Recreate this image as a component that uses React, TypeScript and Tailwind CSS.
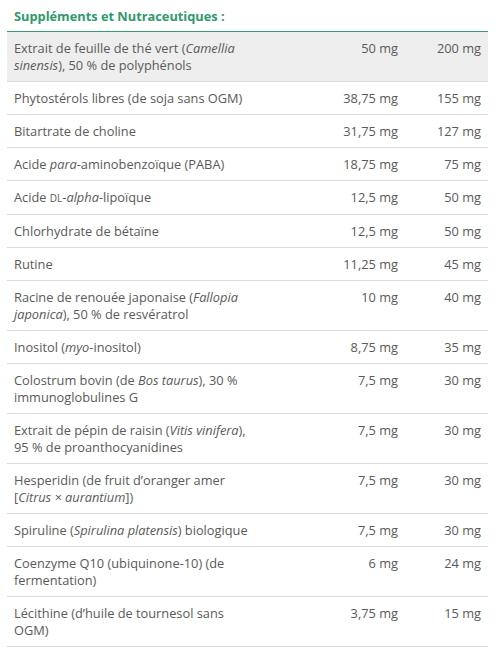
import React from "react";

type Row = { name: React.ReactNode; a: string; b: string; shade?: boolean };

const I = ({ children }: { children: React.ReactNode }) => <i>{children}</i>;

const rows: Row[] = [
  { name: <>Extrait de feuille de thé vert (<I>Camellia sinensis</I>), 50{"\u00a0"}% de polyphénols</>, a: "50 mg", b: "200 mg", shade: true },
  { name: <>Phytostérols libres (de soja sans OGM)</>, a: "38,75 mg", b: "155 mg" },
  { name: <>Bitartrate de choline</>, a: "31,75 mg", b: "127 mg" },
  { name: <>Acide <I>para</I>-aminobenzoïque (PABA)</>, a: "18,75 mg", b: "75 mg" },
  { name: <>Acide <span className="text-[10px] uppercase">dl</span>-<I>alpha</I>-lipoïque</>, a: "12,5 mg", b: "50 mg" },
  { name: <>Chlorhydrate de bétaïne</>, a: "12,5 mg", b: "50 mg" },
  { name: <>Rutine</>, a: "11,25 mg", b: "45 mg" },
  { name: <>Racine de renouée japonaise (<I>Fallopia japonica</I>), 50{"\u00a0"}% de resvératrol</>, a: "10 mg", b: "40 mg" },
  { name: <>Inositol (<I>myo</I>-inositol)</>, a: "8,75 mg", b: "35 mg" },
  { name: <>Colostrum bovin (de <I>Bos taurus</I>), 30{"\u00a0"}% immunoglobulines G</>, a: "7,5 mg", b: "30 mg" },
  { name: <>Extrait de pépin de raisin (<I>Vitis vinifera</I>), 95{"\u00a0"}% de proanthocyanidines</>, a: "7,5 mg", b: "30 mg" },
  { name: <>Hesperidin (de fruit d’oranger amer [<I>Citrus{"\u00a0"}×{"\u00a0"}aurantium</I>])</>, a: "7,5 mg", b: "30 mg" },
  { name: <>Spiruline (<I>Spirulina platensis</I>) biologique</>, a: "7,5 mg", b: "30 mg" },
  { name: <>Coenzyme Q10 (ubiquinone-10) (de fermentation)</>, a: "6 mg", b: "24 mg" },
  { name: <>Lécithine (d’huile de tournesol sans OGM)</>, a: "3,75 mg", b: "15 mg" },
];

export default function App() {
  return (
    <div className="w-[500px] h-[648px] overflow-hidden bg-white" style={{ fontFamily: '"Open Sans", sans-serif' }}>
      <div className="pl-[14px] pt-[6px] pb-[5px] text-[12.8px] font-bold text-[#2f9a6b] leading-[20px]">
        Suppléments et Nutraceutiques :
      </div>
      <table className="ml-[7px] w-[481px] table-fixed border-collapse border-t border-[#3a9c72] text-[12.8px] leading-[17px] text-[#5a5a5a]">
        <colgroup>
          <col className="w-[263px]" />
          <col className="w-[135px]" />
          <col className="w-[83px]" />
        </colgroup>
        <tbody>
          {rows.map((r, i) => (
            <tr key={i} className={`border-b border-[#dcdcdc] ${r.shade ? "bg-[#eeeeee]" : ""}`}>
              <td className="align-top pl-[7px] pr-[16px] pt-[8px] pb-[7px]">{r.name}</td>
              <td className="align-top text-right pr-[7px] pt-[8px] pb-[7px] whitespace-nowrap">{r.a}</td>
              <td className="align-top text-right pr-[7px] pt-[8px] pb-[7px] whitespace-nowrap">{r.b}</td>
            </tr>
          ))}
        </tbody>
      </table>
    </div>
  );
}
